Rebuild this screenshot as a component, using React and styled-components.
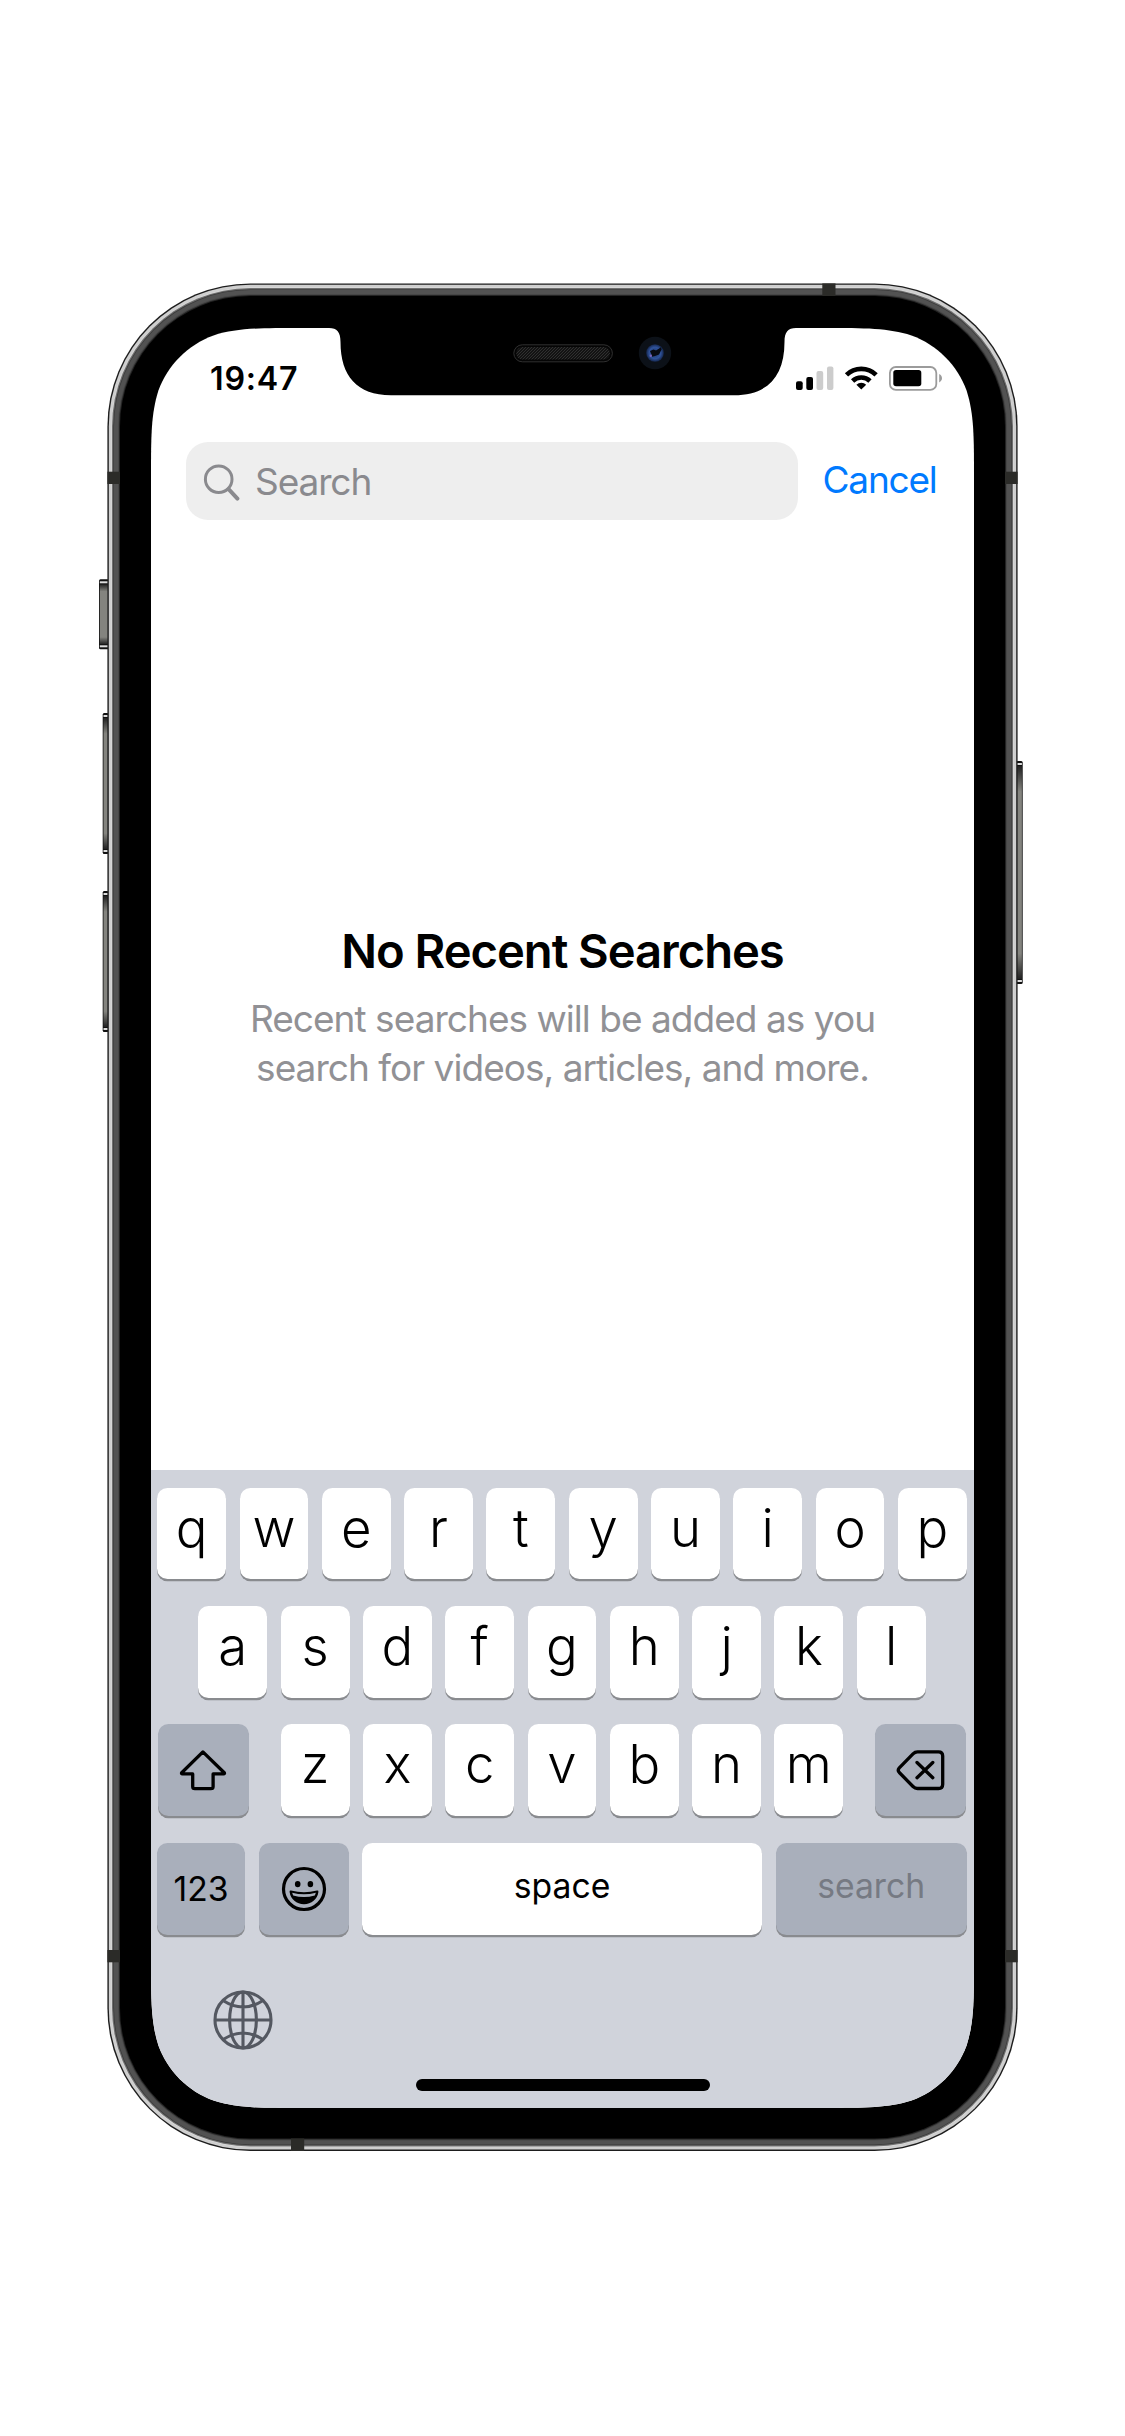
import React from "react";
import styled, { createGlobalStyle, css } from "styled-components";

const GlobalStyle = createGlobalStyle`
  *, *::before, *::after { box-sizing: border-box; }
  body { margin: 0; background: #fff; font-family: Inter, "Liberation Sans", sans-serif; color: #000; }
`;

/* Continuous ("squircle") rounded rectangle. */
const squircle = (x, y, w, h, r) => {
  const corners = [
    [x + w, y, -1, 1, false],
    [x + w, y + h, -1, -1, true],
    [x, y + h, 1, -1, false],
    [x, y, 1, 1, true],
  ];
  const steps = [
    [1.52866, 0], [1.08849, 0], [0.86841, 0], [0.6315, 0.07491],
    [0.37282, 0.16906], [0.16906, 0.37282], [0.07491, 0.6315],
    [0, 0.86841], [0, 1.08849], [0, 1.52866],
  ];
  let d = "";
  corners.forEach(([cx, cy, sx, sy, reverse], i) => {
    const pts = (reverse ? [...steps].reverse() : steps).map(
      ([a, b]) => `${(cx + sx * a * r).toFixed(2)} ${(cy + sy * b * r).toFixed(2)}`
    );
    d += `${i ? "L" : "M"}${pts[0]}C${pts[1]} ${pts[2]} ${pts[3]}C${pts[4]} ${pts[5]} ${pts[6]}C${pts[7]} ${pts[8]} ${pts[9]}`;
  });
  return d + "Z";
};

const Page = styled.main`
  width: 1125px;
  height: 2436px;
  display: flex;
  flex-direction: column;
  align-items: center;
  padding-top: 283px;
  background: #fff;
  overflow: hidden;
`;

const Device = styled.div`
  position: relative;
  width: 910px;
  height: 1868px;
  padding: 45px 43.5px 43px;
`;

const FrameArt = styled.svg`
  position: absolute;
  left: -17.5px;
  top: -13px;
  width: 950px;
  height: 1900px;
`;

const Screen = styled.div`
  position: relative;
  display: flex;
  flex-direction: column;
  width: 823px;
  height: 1780px;
  background: #fff;
  clip-path: path("${squircle(0, 0, 823, 1780, 99)}");
`;

const NotchArt = styled.svg`
  position: absolute;
  left: 0;
  top: 0;
  width: 823px;
  height: 80px;
`;

const StatusBar = styled.header`
  display: flex;
  align-items: center;
  justify-content: space-between;
  height: 101px;
  padding: 0 31px 0 59px;
`;

const Clock = styled.time`
  font-size: 32.2px;
  font-weight: 600;
  line-height: 38px;
  letter-spacing: 0.8px;
`;

const StatusIcons = styled.svg`
  width: 147px;
  height: 27px;
`;

const SearchRow = styled.div`
  display: flex;
  align-items: center;
  margin-top: 13px;
  padding-left: 35px;
`;

const SearchField = styled.div`
  display: flex;
  align-items: center;
  width: 612px;
  height: 78px;
  padding: 2px 0 0 16px;
  border-radius: 22px;
  background: #eee;
  color: #8a8a8e;
  font-size: 37px;
  line-height: 44px;
  letter-spacing: -1.1px;
`;

const SearchIcon = styled.svg`
  width: 38px;
  height: 38px;
  margin: -1px 15px 0 0;
`;

const Cancel = styled.button`
  border: 0;
  margin-left: 24.5px;
  padding: 0 0 3px;
  background: none;
  color: #007aff;
  font: 400 37px/44px Inter, "Liberation Sans", sans-serif;
  letter-spacing: -1.2px;
`;

const EmptyState = styled.section`
  display: flex;
  flex-direction: column;
  align-items: center;
  flex: 1;
  padding-top: 402.6px;
  text-align: center;
`;

const Title = styled.h1`
  margin: 0 0 16.5px;
  font-size: 47.2px;
  font-weight: 600;
  line-height: 56px;
  letter-spacing: -1.05px;
`;

const Description = styled.p`
  margin: 0;
  color: #919195;
  font-size: 37px;
  line-height: 48.6px;
  letter-spacing: -0.96px;
`;

const Keyboard = styled.section`
  display: flex;
  flex-direction: column;
  gap: 26.5px;
  height: 638px;
  padding: 17.6px 7.1px 0 6.1px;
  background: #d0d3db;
`;

const KeyRow = styled.div`
  display: flex;
  justify-content: ${(p) => p.$justify || "center"};
  gap: ${(p) => p.$gap || "13.5px"};
`;

const Key = styled.button`
  display: flex;
  align-items: center;
  justify-content: center;
  flex: none;
  width: ${(p) => p.$w || 68.8}px;
  height: 91.9px;
  margin: ${(p) => p.$margin || 0};
  padding: 0 0 ${(p) => p.$lift || 0}px;
  border: 0;
  border-radius: 10.5px;
  background: #fff;
  box-shadow: 0 2.3px 0 #898b8f;
  color: #000;
  font: 350 52.75px/60px Inter, "Liberation Sans", sans-serif;
  ${(p) => p.$fn && css`background: #a9afbb;`}
  ${(p) => p.$label && css`
    font-size: 33.7px;
    font-weight: 400;
    line-height: 40px;
  `}
  ${(p) => p.$muted && css`color: #767a83;`}
`;

const KeyIcon = styled.svg`
  width: ${(p) => p.$w}px;
  height: ${(p) => p.$h}px;
`;

const GlobeIcon = styled.svg`
  display: block;
  width: 60px;
  height: 60px;
  margin: 28.6px 0 0 56.2px;
`;

const HomeIndicator = styled.div`
  width: 294.4px;
  height: 11.4px;
  margin: 29.4px 0 0 258.6px;
  border-radius: 6px;
  background: #000;
`;

const LAYERS = [
  [0, "#1d1d1d"], [1.4, "#cfcfcf"], [4.2, "#e0e0e0"], [4.6, "#6f6f6f"], [5.8, "#3a3a3a"],
  [6.6, "#525252"], [10.6, "#474747"], [11.6, "#232323"], [12.6, "#000"],
];

const SideButton = ({ x, y, w, h }) => (
  <g>
    <rect x={x} y={y} width={w} height={h} rx="1.5" fill="#111" />
    <rect x={x + 0.8} y={y + 2} width={w - 1.6} height="2" fill="#ddd" />
    <rect x={x + 0.8} y={y + h - 4} width={w - 1.6} height="2" fill="#ddd" />
    <rect x={x + 0.8} y={y + 5} width={w - 1.6} height={h - 10} fill="url(#metal)" />
  </g>
);

const Frame = () => (
  <FrameArt viewBox="90 270 950 1900">
    <defs>
      <linearGradient id="metal" x1="0" y1="0" x2="0" y2="1">
        <stop offset="0" stopColor="#222" />
        <stop offset=".12" stopColor="#84847f" />
        <stop offset=".88" stopColor="#84847f" />
        <stop offset="1" stopColor="#222" />
      </linearGradient>
    </defs>
    <SideButton x={99} y={579.3} w={10} h={70} />
    <SideButton x={102.7} y={713} w={6} h={141} />
    <SideButton x={102.7} y={891} w={6} h={141} />
    <SideButton x={1016} y={761} w={6.7} h={223} />
    {LAYERS.map(([inset, fill]) => (
      <rect
        key={inset}
        fill={fill}
        x={107.4 + inset}
        y={283.4 + inset}
        width={910.2 - inset * 2}
        height={1867.6 - inset * 2}
        rx={143 - inset}
      />
    ))}
    <g fill="#2b2b28">
      <rect x="107.4" y="471.7" width="12.6" height="12.3" />
      <rect x="1005" y="471.7" width="12.6" height="12.3" />
      <rect x="107.4" y="1950" width="12.6" height="12.3" />
      <rect x="1005" y="1950" width="12.6" height="12.3" />
      <rect x="822.3" y="283.4" width="13.2" height="12.6" />
      <rect x="291" y="2138.4" width="13.2" height="12.6" />
    </g>
  </FrameArt>
);

const Notch = () => (
  <NotchArt viewBox="151 328 823 80">
    <defs>
      <pattern id="mesh" width="3" height="3" patternUnits="userSpaceOnUse">
        <rect width="3" height="3" fill="#131313" />
        <path d="M0 3L3 0" stroke="#303030" strokeWidth="1" />
      </pattern>
      <radialGradient id="lens">
        <stop offset="0" stopColor="#1c356b" />
        <stop offset=".65" stopColor="#2f5299" />
        <stop offset="1" stopColor="#14264d" />
      </radialGradient>
    </defs>
    <path d="M325 327V328H329C337 328 340.5 332 340.5 342C340.5 376 357 395.2 391 395.2H734C768 395.2 784.5 376 784.5 342C784.5 332 788 328 796 328H800V327Z" fill="#000" />
    <rect x="513.8" y="344.8" width="98.6" height="17" rx="8.5" fill="#050505" stroke="#303030" />
    <rect x="516.3" y="347" width="93.6" height="12.6" rx="6.3" fill="url(#mesh)" />
    <circle cx="655" cy="353" r="16.2" fill="#0c1118" />
    <circle cx="655" cy="353" r="8.8" fill="url(#lens)" />
    <path d="M650 351l3.5-1.5 2.5 1 5-3.2.6 2.2-2.6 5-4 1.6-3 .6-.6-2.4z" fill="#070a12" />
    <circle cx="650.8" cy="355.8" r="1.2" fill="#7a62b8" />
  </NotchArt>
);

const Status = () => (
  <StatusIcons viewBox="796 365 147 27">
    <rect x="796" y="381.3" width="6.7" height="8.7" rx="2" />
    <rect x="806.3" y="377" width="6.7" height="13" rx="2" />
    <rect x="816.5" y="371" width="6.7" height="19" rx="2" fill="#ccc" />
    <rect x="827" y="366.5" width="6.4" height="23.5" rx="2" fill="#ccc" />
    <path d="M861.3 389.6l-4.9-4.9a7.4 7.4 0 0 1 9.8 0z" />
    <g fill="none" stroke="#000" strokeWidth="4.7">
      <path d="M852.6 381a12.6 12.6 0 0 1 17.4 0" />
      <path d="M846.5 374.9a21.2 21.2 0 0 1 29.6 0" />
    </g>
    <rect x="889.9" y="367" width="46.4" height="22.9" rx="6" fill="none" stroke="#9b9b9b" strokeWidth="1.8" />
    <rect x="893.3" y="370" width="28" height="16.3" rx="2.8" />
    <path d="M939.2 374v8.4c3.7-1.7 3.7-6.7 0-8.4z" fill="#9b9b9b" />
  </StatusIcons>
);

const Magnifier = () => (
  <SearchIcon viewBox="202 461 38 38" fill="none" stroke="#8a8a8e" strokeLinecap="round">
    <circle cx="218.7" cy="477.2" r="13.3" strokeWidth="3" />
    <path d="M228.6 487.2L237.4 496.6" strokeWidth="4" />
  </SearchIcon>
);

const ShiftIcon = () => (
  <KeyIcon $w={48} $h={42} viewBox="179.5 1749.5 48 42" fill="none" stroke="#000" strokeWidth="3.3" strokeLinejoin="round">
    <path d="M203.4 1752.4L182.2 1773.2Q181.6 1774.2 183 1774.4H193.2V1787Q193.2 1789.2 195.4 1789.2H211.4Q213.6 1789.2 213.6 1787V1774.4H223.9Q225.4 1774.2 224.8 1773.2Z" />
  </KeyIcon>
);

const DeleteIcon = () => (
  <KeyIcon $w={50} $h={42} viewBox="896 1749.5 50 42" fill="none" stroke="#000" strokeWidth="3.3" strokeLinecap="round" strokeLinejoin="round">
    <path d="M917.5 1752.4H938.5Q942.7 1752.4 942.7 1756.6V1784.8Q942.7 1789 938.5 1789H917.5Q915 1789 913 1787L899.3 1773Q897.2 1770.7 899.3 1768.4L913 1754.4Q915 1752.4 917.5 1752.4Z" />
    <path d="M917 1763L932.8 1778.2M932.8 1763L917 1778.2" />
  </KeyIcon>
);

const SmileIcon = () => (
  <KeyIcon $w={46} $h={46} viewBox="-23 -23 46 46">
    <circle r="20.5" fill="none" stroke="#000" strokeWidth="3.2" />
    <ellipse cx="-6.3" cy="-4.9" rx="2.8" ry="3.2" />
    <ellipse cx="6.4" cy="-4.9" rx="2.8" ry="3.2" />
    <path d="M-13 1.6Q0 5 13 1.6Q14.6 1.2 14.4 3C13.4 10.4 7.4 15.2 0 15.2S-13.4 10.4-14.4 3Q-14.6 1.2-13 1.6Z" />
    <path d="M-11.8 3.8Q0 6.8 11.8 3.8Q11.5 5.2 10.8 6.4Q0 9.4-10.8 6.4Q-11.5 5.2-11.8 3.8Z" fill="#a9afbb" />
  </KeyIcon>
);

const Globe = () => (
  <GlobeIcon viewBox="-30 -30 60 60" fill="none" stroke="#545861" strokeWidth="3.1">
    <circle r="28" />
    <ellipse rx="13.4" ry="28" />
    <path d="M0-28V28M-28 0H28M-20-19.5Q0-6.6 20-19.5M-20 19.5Q0 6.6 20 19.5" />
  </GlobeIcon>
);

const letters = (row) => row.split("").map((c) => <Key key={c} $lift={12}>{c}</Key>);

export default function App() {
  return (
    <>
      <GlobalStyle />
      <Page>
        <Device>
          <Frame />
          <Screen>
            <StatusBar>
              <Clock>19:47</Clock>
              <Status />
            </StatusBar>
            <SearchRow>
              <SearchField><Magnifier />Search</SearchField>
              <Cancel>Cancel</Cancel>
            </SearchRow>
            <EmptyState>
              <Title>No Recent Searches</Title>
              <Description>
                Recent searches will be added as you<br />search for videos, articles, and more.
              </Description>
            </EmptyState>
            <Keyboard>
              <KeyRow>{letters("qwertyuiop")}</KeyRow>
              <KeyRow>{letters("asdfghjkl")}</KeyRow>
              <KeyRow>
                <Key $fn $w={91.8} $margin="0 17.9px 0 0" aria-label="shift"><ShiftIcon /></Key>
                {letters("zxcvbnm")}
                <Key $fn $w={91.8} $margin="0 0 0 17.9px" aria-label="delete"><DeleteIcon /></Key>
              </KeyRow>
              <KeyRow $gap="0px" $justify="space-between">
                <Key $fn $label $w={88}>123</Key>
                <Key $fn $w={89.8} aria-label="emoji"><SmileIcon /></Key>
                <Key $label $w={399.7} $lift={5}>space</Key>
                <Key $fn $label $muted $w={191.4} $lift={5}>search</Key>
              </KeyRow>
              <div>
                <Globe />
                <HomeIndicator />
              </div>
            </Keyboard>
            <Notch />
          </Screen>
        </Device>
      </Page>
    </>
  );
}
